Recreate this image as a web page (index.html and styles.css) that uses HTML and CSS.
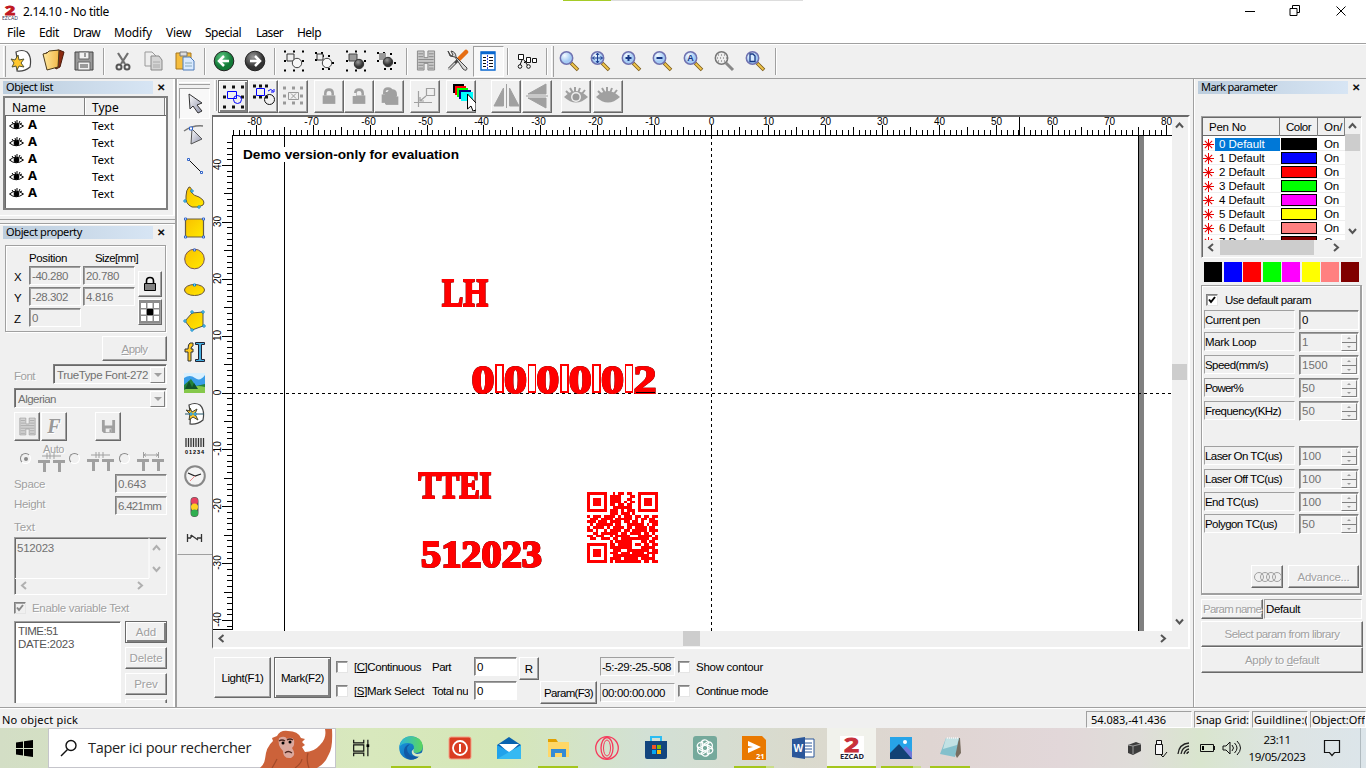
FILE: index.html
```html
<!DOCTYPE html>
<html lang="fr">
<head>
<meta charset="utf-8">
<title>2.14.10 - No title</title>
<link rel="stylesheet" href="styles.css">
</head>
<body>
<svg width="0" height="0" class="defs">
<defs>
<linearGradient id="gold" x1="0" y1="0" x2="1" y2="1"><stop offset="0" stop-color="#f9c000"/><stop offset="1" stop-color="#ffe900"/></linearGradient>
<linearGradient id="steel" x1="0" y1="0" x2="1" y2="1"><stop offset="0" stop-color="#fff"/><stop offset="1" stop-color="#8f93ab"/></linearGradient>
<linearGradient id="edgeg" x1="0" y1="0" x2="1" y2="1"><stop offset="0" stop-color="#1b9de2"/><stop offset="1" stop-color="#0c59a4"/></linearGradient>
<linearGradient id="edget" x1="0" y1="0" x2="1" y2="0"><stop offset="0" stop-color="#2bb5dd"/><stop offset="1" stop-color="#5bd65b"/></linearGradient>
<linearGradient id="fold" x1="0" y1="0" x2="1" y2="0"><stop offset="0" stop-color="#ffe9a0"/><stop offset="1" stop-color="#f2b84a"/></linearGradient>
<radialGradient id="greenb" cx=".4" cy=".3"><stop offset="0" stop-color="#5cc782"/><stop offset="1" stop-color="#137a38"/></radialGradient>
<radialGradient id="greyb" cx=".4" cy=".3"><stop offset="0" stop-color="#999"/><stop offset="1" stop-color="#333"/></radialGradient>
<radialGradient id="lens" cx=".35" cy=".3"><stop offset="0" stop-color="#f4faff"/><stop offset="1" stop-color="#a4cbf5"/></radialGradient>
<symbol id="mag" viewBox="0 0 24 24"><path d="M13 14l7 7" stroke="#7b5a18" stroke-width="3.600"/><path d="M13.500 14.500l6 6" stroke="#f0c64c" stroke-width="1.800"/><circle cx="8.500" cy="9" r="6.200" fill="url(#lens)" stroke="#7072b0" stroke-width="1.500"/></symbol>
<symbol id="eye" viewBox="0 0 15 11"><path d="M.5 6Q7 .5 14.500 6Q7 11.500 .5 6" fill="#fff" stroke="#000"/><path d="M3 2l1.500 2M6 1l.5 2M8 0v3M11 1l-1 2M13 3l-2 1" stroke="#000"/><circle cx="7.500" cy="6" r="2.800"/></symbol>
<symbol id="bigeye" viewBox="0 0 26 20"><path d="M1 11Q13-1 25 11Q13 22 1 11" fill="#a0a0a0"/><path d="M3 5l4 4M7 2l3 5M12 1v5M17 2l-2 5M22 4l-4 5" stroke="#a0a0a0" stroke-width="2"/></symbol>
<symbol id="lock" viewBox="0 0 16 18"><path d="M4.500 8V6q0-3.500 3.500-3.500t3.500 3.500v2" fill="none" stroke="#a0a0a0" stroke-width="2.400"/><path d="M2 8h12v8H2z" fill="#a0a0a0"/></symbol>
<symbol id="h" viewBox="0 0 20 22"><path d="M1 1h7v7h4V1h7v20h-7v-7H8v7H1z" fill="#c8c8c8" stroke="#888"/><path d="M2 4h5M2 7h5M2 10h16M2 13h16M2 16h5M2 19h5M13 4h5M13 7h5M13 16h5M13 19h5" stroke="#888"/></symbol>
<symbol id="page" viewBox="0 0 24 24"><path d="M6 3Q12 0 17 3Q22 8 20 18Q14 23 7 22Q8 12 6 3z" fill="#fff" stroke="#444" stroke-width="1.200"/></symbol>
<symbol id="tt" viewBox="0 0 28 19"><path d="M0 7h12v3h-4v9H5v-9H0zM15 7h12v3h-4v9h-3v-9h-5z" fill="#a0a0a0"/><path d="M4 3h19M9 0v6M12 0v6M16 0v6" stroke="#a0a0a0" fill="none"/></symbol>
<symbol id="tw" viewBox="0 0 28 19"><path d="M0 7h12v3h-4v9H5v-9H0zM15 7h12v3h-4v9h-3v-9h-5z" fill="#a0a0a0"/><path d="M6.500 3h15M6.500 0v6M21.500 0v6M9 1.500L7 3l2 1.500M19 1.500L21 3l-2 1.500" stroke="#a0a0a0" fill="none"/></symbol>
<symbol id="star" viewBox="0 0 12 12"><path d="M6 0v12M0 6h12M2 2l8 8M10 2l-8 8" stroke="#e80000" stroke-width="1.100"/></symbol>
</defs>
</svg>
<header class="title"><i class="share"></i>
<svg class="logo" viewBox="0 0 16 16"><text x="3" y="10.500" font-size="13" font-weight="bold" fill="#c01722" stroke="#c01722" textLength="10" lengthAdjust="spacingAndGlyphs">2</text><text x="0" y="15.500" font-size="5" textLength="16" lengthAdjust="spacingAndGlyphs" fill="#335">EZCAD</text></svg>
<span data-w="86">2.14.10 - No title</span>
<svg class="winctl" width="110" height="20" viewBox="0 0 110 20"><path d="M5 10.500h10M50 7.500h7v7h-7zM52.500 7v-2.500h7v7H57M96.500 5.500l9 9M105.500 5.500l-9 9" fill="none" stroke="#000"/></svg>
</header>
<nav class="menu"><span class="m1" data-w="18">File</span><span class="m2" data-w="20">Edit</span><span class="m3" data-w="27">Draw</span><span class="m4" data-w="38">Modify</span><span class="m5" data-w="25">View</span><span class="m6" data-w="36">Special</span><span class="m7" data-w="27">Laser</span><span data-w="24">Help</span></nav>
<div class="toolbar">
<i class="grip"></i>
<b><svg viewBox="0 0 24 24"><use href="#page"/><path d="M8 6l1 5 5-1-3 4 3 4-5-1-2 4-1-4-4 1 2-4-3-4 4 1z" fill="#ffc72b" stroke="#553" stroke-width="1"/></svg></b>
<b><svg viewBox="0 0 24 24"><path d="M5 4l13-3 5 2-4 15-4 2z" fill="#8c2a10" stroke="#4b1b0b"/><path d="M2 5l4-1 2-2 10-1-1 17-11 3z" fill="url(#fold)" stroke="#4b3a1b"/></svg></b>
<b><svg viewBox="0 0 24 24"><path d="M3 3h18v18H3z" fill="#999" stroke="#444"/><path d="M7 3h10v7H7zM6 13h12v8H6z" fill="#f2f2f2" stroke="#666"/><path d="M13 4v4M8 16h8M8 18h8" stroke="#444"/></svg></b>
<i class="sep"></i>
<b><svg viewBox="0 0 24 24"><path d="M7 4l7 11M17 4l-7 11" stroke="#707070" stroke-width="2.200"/><circle cx="8" cy="18" r="2.500" fill="none" stroke="#555" stroke-width="2"/><circle cx="16" cy="18" r="2.500" fill="none" stroke="#555" stroke-width="2"/></svg></b>
<b><svg viewBox="0 0 24 24"><path d="M3 3h7l4 4v10H3z" fill="#eee" stroke="#999"/><path d="M9 7h8l3 4v10H9z" fill="#d5d5d5" stroke="#888"/><path d="M11 13h7M11 16h7M11 18h7" stroke="#aaa"/></svg></b>
<b><svg viewBox="0 0 24 24"><path d="M3 4h15v16H3z" fill="#f5bd3e" stroke="#a7771d"/><path d="M7 3h7v4H7z" fill="#ddd" stroke="#777"/><path d="M10 8h7l4 4v9H10z" fill="#d9eaff" stroke="#4d7ab8"/><path d="M12 14h7M12 17h7" stroke="#8ab"/></svg></b>
<i class="sep"></i>
<b><svg viewBox="0 0 24 24"><circle cx="12" cy="12" r="9.800" fill="url(#greenb)" stroke="#222"/><path d="M12 7l-5 5 5 5M7 12h10" fill="none" stroke="#fff" stroke-width="2.500"/></svg></b>
<b><svg viewBox="0 0 24 24"><circle cx="12" cy="12" r="9.800" fill="url(#greyb)" stroke="#222"/><path d="M12 7l5 5-5 5M17 12H7" fill="none" stroke="#fff" stroke-width="2.500"/></svg></b>
<i class="sep"></i>
<b><svg viewBox="0 0 24 24"><path d="M2 2.500h20M2 12h20M2 21.500h20" stroke="#000" stroke-width="2" stroke-dasharray="2 7"/><path d="M5 5h7v7H5z" fill="#eee" stroke="#333"/><circle cx="15" cy="14" r="4.700" fill="#f8f8f8" stroke="#444"/></svg></b>
<b><svg viewBox="0 0 24 24"><path d="M2 4h10M2 11h4M9 7h12M9 20h12M19 14h2" stroke="#000" stroke-width="2" stroke-dasharray="2 4"/><path d="M4 5h6v6H4z" fill="#eee" stroke="#333"/><circle cx="14" cy="14" r="4.700" fill="#f8f8f8" stroke="#444"/></svg></b>
<b><svg viewBox="0 0 24 24"><path d="M2 2.500h20M2 12h20M2 21.500h20" stroke="#000" stroke-width="2" stroke-dasharray="2 7"/><path d="M5 5h8v7H5z" fill="#999" stroke="#444"/><circle cx="15" cy="15" r="4.700" fill="url(#greyb)" stroke="#333"/></svg></b>
<b><svg viewBox="0 0 24 24"><path d="M2 4h10M2 12h4M9 5h12M9 20h12M19 14h2" stroke="#000" stroke-width="2" stroke-dasharray="2 4"/><path d="M4 4h7v7H4z" fill="#999"/><circle cx="13" cy="13" r="4.700" fill="url(#greyb)" stroke="#333"/></svg></b>
<i class="sep"></i>
<b><svg viewBox="0 0 24 24"><use href="#h" x="2" y="1" width="20" height="21"/></svg></b>
<b><svg viewBox="0 0 24 24"><path d="M20 4L4 20" stroke="#444" stroke-width="3"/><path d="M21 3l-7 7" stroke="#e66e14" stroke-width="4.500" stroke-linecap="round"/><path d="M3 2l2 5 5 1 8 12q4 3 4-1L11 8q0-5-5-6l2 4-2 1z" fill="#d9d9d9" stroke="#444"/><path d="M10 14L3 21" stroke="#ccc" stroke-width="1.500"/></svg></b>
<b class="pressed"><svg viewBox="0 0 24 24"><path d="M5 3h14v18H5z" fill="#fff" stroke="#0867cf" stroke-width="1.400"/><path d="M5 4h14" stroke="#0867cf" stroke-width="2.500"/><path d="M7 8.500h3M13 8.500h4M7 11.500h3M13 11.500h4M7 14.500h3M13 14.500h4M7 17.500h3M13 17.500h4" stroke="#111"/><path d="M11.500 6v14" stroke="#34d" stroke-dasharray="2 1"/></svg></b>
<i class="sep"></i>
<b><svg viewBox="0 0 24 24"><path d="M3.500 5.500h5v5h-5zM11.500 8.500h4v5h-4zM17.500 9.500h4v4h-4zM7 11l-2 5M9 11l4 6M9 14l2-2" fill="#fff" stroke="#111"/><circle cx="5" cy="17.500" r="1.800" fill="#fff" stroke="#111"/><circle cx="13.500" cy="17.500" r="1.800" fill="#fff" stroke="#111"/></svg></b>
<i class="sep se"></i><i class="grip g2"></i>
<b><svg viewBox="0 0 24 24"><use href="#mag"/></svg></b>
<b><svg viewBox="0 0 24 24"><use href="#mag"/><path d="M8.500 4v10M3.500 9h10M7 6l1.500-2L10 6M7 12l1.500 2 1.500-2M5.500 7.500L3.500 9l2 1.500M11.500 7.500l2 1.500-2 1.500" fill="none" stroke="#1d3f91"/></svg></b>
<b><svg viewBox="0 0 24 24"><use href="#mag"/><path d="M8.500 6v6M5.500 9h6" stroke="#173784" stroke-width="2"/></svg></b>
<b><svg viewBox="0 0 24 24"><use href="#mag"/><path d="M5.500 9h6" stroke="#173784" stroke-width="2"/></svg></b>
<b><svg viewBox="0 0 24 24"><use href="#mag"/><text x="5.200" y="12.200" font-size="9" font-weight="bold" fill="#173784">A</text></svg></b>
<b><svg viewBox="0 0 24 24"><path d="M13 14l7 7" stroke="#888" stroke-width="3"/><circle cx="8.500" cy="9" r="6.200" fill="#eee" stroke="#777" stroke-width="1.500"/><path d="M5 6h8M4 9h10M5 12h8" stroke="#666" stroke-dasharray="1 2"/></svg></b>
<b><svg viewBox="0 0 24 24"><use href="#mag"/><path d="M6 5h3l2 2v5.500H6z" fill="#d7ebff" stroke="#173784" stroke-width="1.300"/></svg></b>
<i class="sep"></i>
</div>
<main>
<aside class="left">
<div class="cap"><span data-w="47">Object list</span></div><i class="close">✕</i>
<div class="objlist sunk">
<div class="lhead"><span>Name</span><span>Type</span></div>
<div class="orow"><svg><use href="#eye"/></svg><b>A</b><span>Text</span></div>
<div class="orow"><svg><use href="#eye"/></svg><b>A</b><span>Text</span></div>
<div class="orow"><svg><use href="#eye"/></svg><b>A</b><span>Text</span></div>
<div class="orow"><svg><use href="#eye"/></svg><b>A</b><span>Text</span></div>
<div class="orow"><svg><use href="#eye"/></svg><b>A</b><span>Text</span></div>
</div>
<div class="split"></div>
<div class="cap c2"><span data-w="76">Object property</span></div><i class="close">✕</i>
<div class="group">
<div class="ghead"><span data-w="38">Position</span><span data-w="43">Size[mm]</span></div>
<div class="gbody">
<div class="pos"><span>X</span><u data-w="36">-40.280</u><u data-w="33">20.780</u><span>Y</span><u data-w="36">-28.302</u><u data-w="27">4.816</u><span>Z</span><u>0</u></div>
<div class="gside"><div class="btn"><svg viewBox="0 0 16 18" width="16" height="18"><path d="M4.500 8V6q0-3.500 3.500-3.500t3.500 3.500v2" fill="none" stroke="#000" stroke-width="1.600"/><path d="M2.500 8.500h11v7h-11z" fill="#808080" stroke="#000"/></svg></div>
<div class="btn dark"><svg width="18" height="18" viewBox="0 0 18 18"><path d="M0 0h5v5H0zM6.500 0h5v5h-5zM13 0h5v5h-5zM0 6.500h5v5H0zM13 6.500h5v5h-5zM0 13h5v5H0zM6.500 13h5v5h-5zM13 13h5v5h-5z" fill="#fff"/><path d="M6 6h6v6H6z"/></svg></div></div>
</div></div>
<div class="apply btn dis"><span data-w="26"><ins>A</ins>pply</span></div>
<div class="fontrow dis"><span data-w="21">Font</span><div class="sel"><span data-w="91">TrueType Font-272</span><em></em></div></div>
<div class="sel alg"><span data-w="38">Algerian</span><em></em></div>
<div class="fbtns"><div class="btn"><svg viewBox="0 0 20 22" width="17" height="19" opacity=".7"><use href="#h"/></svg></div><div class="btn fi">F</div><div class="btn sv"><svg viewBox="0 0 16 16" width="15" height="15"><path d="M1 1h14v14H3l-2-2z" fill="#a0a0a0"/><path d="M4 1h8v6H4zM5 10h6v4H5z" fill="#eee"/><path d="M9 11h2v3H9z" fill="#a0a0a0"/></svg></div></div>
<div class="radios dis"><i class="rad on"></i><div class="auto"><span data-w="21">Auto</span><svg><use href="#tt"/></svg></div><i class="rad"></i><svg><use href="#tt"/></svg><i class="rad r3"></i><svg><use href="#tw"/></svg></div>
<div class="pr dis p1"><span data-w="31">Space</span><u data-w="28">0.643</u></div>
<div class="pr dis p2"><span data-w="31">Height</span><u data-w="43">6.421mm</u></div>
<div class="txl dis"><span data-w="21">Text</span></div>
<div class="area sunk"><span data-w="37">512023</span><svg width="149" height="55" viewBox="0 0 149 55"><path d="M134 0v40M0 40.500h134" stroke="#fff" stroke-width="1"/><path d="M138 12l3.500-4 3.500 4M138 29l3.500 4 3.500-4M11 44l-4 3.500 4 3.500M123 44l4 3.500-4 3.500" fill="none" stroke="#b0b0b0" stroke-width="2"/></svg></div>
<div class="env dis"><i class="chk off"><svg viewBox="0 0 10 10"><path d="M2 4.500l2 2.500 4-5" fill="none" stroke="#888" stroke-width="2"/></svg></i><span data-w="97">Enable variable Text</span></div>
<div class="vars"><div class="vlist sunk"><span data-w="40">TIME:51</span><br><span data-w="56">DATE:2023</span></div><div class="vb dis"><div class="btn foc">Add</div><div class="btn">Delete</div><div class="btn">Prev</div><div class="btn"></div></div></div>
</aside>
<aside class="tools">
<i class="hg"></i>
<b class="pressed"><svg viewBox="0 0 24 24"><path d="M6 2l1 15 3-3 5 7 4-2-5-6 5-2z" fill="url(#steel)" stroke="#333"/></svg></b>
<b><svg viewBox="0 0 24 24"><path d="M1 8Q10 2 20 3" fill="none" stroke="#777" stroke-width="1.500"/><path d="M9 6l-1 15 11-5z" fill="url(#steel)" stroke="#555"/><path d="M6.500 4h3v3h-3z" fill="#fff" stroke="#36c"/></svg></b>
<b><svg viewBox="0 0 24 24"><path d="M6 6l12 12" stroke="#111"/><path d="M4.500 4.500h2v2h-2zM17.500 17.500h2v2h-2z" fill="#fff" stroke="#36c"/></svg></b>
<b><svg viewBox="0 0 24 24"><path d="M6 2Q9 2 8 7Q11 11 16 12Q23 16 20 20Q16 23 9 22Q2 19 3 11Q3 5 6 2z" fill="url(#gold)" stroke="#645535"/><path d="M8 5h2v2H8zM1 15h2v2H1zM15 21h2v2h-2z" fill="#fff" stroke="#08c"/></svg></b>
<b><svg viewBox="0 0 24 24"><path d="M2.500 3h18v18h-18z" fill="url(#gold)" stroke="#665d45" stroke-width="1.200"/><path d="M1.500 2h2v2h-2zM19.500 2h2v2h-2zM1.500 20h2v2h-2zM19.500 20h2v2h-2z" fill="#fff" stroke="#36c"/></svg></b>
<b><svg viewBox="0 0 24 24"><circle cx="11.500" cy="12" r="9.800" fill="url(#gold)" stroke="#755"/><path d="M10.500 2h2v2h-2z" fill="#fff" stroke="#36c"/></svg></b>
<b><svg viewBox="0 0 24 24"><ellipse cx="11.500" cy="12" rx="10" ry="5.500" fill="url(#gold)" stroke="#665540"/><path d="M10.500 6h2v2h-2z" fill="#fff" stroke="#08c"/></svg></b>
<b><svg viewBox="0 0 24 24"><path d="M9 4l11-1v14l-11 4-7-9z" fill="url(#gold)" stroke="#555"/><path d="M8 2h2v2H8zM19 2h2v2h-2zM1 11h2v2H1zM20 16h2v2h-2zM8 20h2v2H8z" fill="#fff" stroke="#08c"/></svg></b>
<b><svg viewBox="0 0 24 24"><path d="M10 6V3H7Q5 4 5 9H2v3h3v9h3v-9h2V9H8q0-3 2-3z" fill="#ffc91a" stroke="#333"/><path d="M12.500 2.500h9v2h-3v15h3v2h-9v-2h3v-15h-3z" fill="#45aee0" stroke="#223"/></svg></b>
<b><svg viewBox="0 0 24 24"><path d="M1 2h21v20H1z" fill="#3a9de8"/><path d="M1 7q6-4 11 0t10-3v-2H1z" fill="#d8f0ff"/><path d="M1 14l7-6 5 7 9-2v9H1z" fill="#22823a"/><path d="M1 19q10-6 21-3v6H1z" fill="#85c84a"/><path d="M2 18l4-8 4 8zM8 18l3-6 4 6z" fill="#12522a"/></svg></b>
<b><svg viewBox="0 0 24 24"><use href="#page"/><path d="M2 12h19" stroke="#256"/><path d="M7 6l2 4 5-3-2 5 3 6-5-3-4 3 1-6-4-4 4 1z" fill="#ffc72b" stroke="#443"/><path d="M7 11h2v2H7zM11 11h2v2h-2z" fill="#fff" stroke="#08c"/></svg></b>
<b><svg viewBox="0 0 24 24"><path d="M3 5v9M5.500 5v9M8 5v9M10.500 5v9M13 5v9M15.500 5v9M18 5v9M20.500 5v9" stroke="#333" stroke-width="1.300"/><text x="2" y="20.500" font-size="5.500" textLength="19">01234</text></svg></b>
<b><svg viewBox="0 0 24 24"><circle cx="12" cy="12" r="9.800" fill="#f4f4f4" stroke="#888" stroke-width="2"/><path d="M5 9l7 3 6-2" fill="none" stroke="#222" stroke-width="1.300"/><path d="M12 12l-5 5" stroke="#e88"/></svg></b>
<b><svg viewBox="0 0 24 24"><rect x="7.500" y="2" width="8" height="20" rx="4" fill="#555"/><circle cx="11.500" cy="6" r="3.500" fill="#e54060"/><circle cx="11.500" cy="12" r="3.500" fill="#ffd020"/><circle cx="11.500" cy="18" r="3.500" fill="#2fae50"/></svg></b>
<b><svg viewBox="0 0 24 24"><path d="M4.500 8v8M18.500 8v8M4 12h4M14 12h4M8 9l7 5M8 9v3" stroke="#333" fill="none" stroke-width="1.300"/></svg></b>
</aside>
<section class="center">
<div class="bar2"><i class="grip"></i>
<div class="btn foc"><svg viewBox="0 0 26 26"><path d="M3 4h3M12 4h3M21 4h3M3 14h3M21 14h3M3 24h3M12 24h3M21 24h3" stroke="#111" stroke-width="3"/><path d="M7.500 8.500h9v7h-9z" fill="none" stroke="#00f"/><circle cx="17.500" cy="16.500" r="4" fill="none" stroke="#00f"/></svg></div>
<div class="btn"><svg viewBox="0 0 26 26"><path d="M3 3h3M9 3h3M15 3h3M3 14h3M9 14h3M15 14h3" stroke="#111" stroke-width="3"/><path d="M6.500 5.500h8v7h-8zM18 8q3-3 5 0m1-2v3h-3" fill="none" stroke="#00f"/><circle cx="19.500" cy="16.500" r="5" fill="none" stroke="#111"/></svg></div>
<div class="btn"><svg viewBox="0 0 26 26"><path d="M3 5h3M12 5h3M20 5h3M3 13h3M20 13h3M3 20h3M12 20h3M20 20h3" stroke="#999" stroke-width="3"/><path d="M8.500 9.500h10v7h-10zM11 10.500l5 5M16 10.500l-5 5" fill="none" stroke="#999"/></svg></div>
<div class="btn s7"><svg viewBox="0 0 26 26"><use href="#lock" x="4" y="4" width="18" height="19"/></svg></div>
<div class="btn"><svg viewBox="0 0 26 26"><use href="#lock" x="4" y="4" width="18" height="19"/><path d="M6 10h4v3H6z" fill="#efefef"/></svg></div>
<div class="btn"><svg viewBox="0 0 26 26"><use href="#lock" x="3" y="3" width="18" height="19"/><use href="#lock" x="7" y="5" width="18" height="19"/><path d="M9 9h11v12H9z" fill="#a0a0a0"/></svg></div>
<div class="btn s7"><svg viewBox="0 0 26 26"><path d="M2 19.500h18M6.500 8v16M14.500 5.500h8v7h-8zM14 13l-6 5M8 14v4h4" fill="none" stroke="#a0a0a0" stroke-width="1.200"/></svg></div>
<div class="btn s7 col"><svg viewBox="0 0 26 28"><path d="M3 1h11v9H3z"/><path d="M5 3h11v9H5z" fill="red"/><path d="M7 5h11v9H7z" fill="#0f0"/><path d="M9 7h12v9H9z" fill="navy"/><path d="M11 9h12v9H11z" fill="#0ff"/><path d="M17.500 11v15l3.500-3 2 5 3-1v-7z" fill="#fff" stroke="#000"/></svg></div>
<div class="btn s16"><svg viewBox="0 0 26 26"><path d="M10.500 5v18H1zM16.500 5v18H26zM13.500 1v24" fill="#a0a0a0" stroke="#a0a0a0"/></svg></div>
<div class="btn s2"><svg viewBox="0 0 26 26"><path d="M22 1v10H4zM22 25V15H4zM2 13h22" fill="#a0a0a0" stroke="#a0a0a0"/></svg></div>
<div class="btn s10"><svg viewBox="0 0 26 26"><use href="#bigeye" y="3" width="26" height="20"/><circle cx="13" cy="14" r="5" fill="#eee"/><circle cx="13" cy="14" r="3.500" fill="#999"/></svg></div>
<div class="btn s3"><svg viewBox="0 0 26 26"><use href="#bigeye" y="3" width="26" height="20"/></svg></div>
</div>
<div class="view">
<svg id="canvas" width="959" height="514" viewBox="213 117 959 514">
<path d="M1141.500 136v495" stroke="#808080" stroke-width="5"/><path d="M284.500 136v495M1138.500 136v495" stroke="#000"/>
<path d="M241 147h220v15H241z" fill="#fff"/><text x="243" y="159" class="demo" textLength="216" lengthAdjust="spacingAndGlyphs">Demo version-only for evaluation</text>
<path d="M232 393.500h940M711.500 136v495" stroke="#000" stroke-dasharray="3 3"/>
<g id="ruler" stroke="#000"></g><g id="labels" class="rl"></g>
<g class="alg-t"><text x="442" y="305.500" font-size="41" textLength="46" lengthAdjust="spacingAndGlyphs">LH</text>
<text x="418.500" y="497.500" font-size="37" textLength="73" lengthAdjust="spacingAndGlyphs">TTEI</text>
<text x="421" y="567" font-size="37" textLength="121" lengthAdjust="spacingAndGlyphs">512023</text></g>
<g class="alg-t" id="serial"></g>
<path d="M636 392.500h19" stroke="#000"/>
<g id="qr" fill="red"></g>
</svg>
<div class="vs"><svg width="16" height="514" viewBox="0 0 16 514"><path d="M0 247h15v16H0z" fill="#cdcdcd"/><path d="M4 10.500l3.500-4 3.500 4M4 502.500l3.500 4 3.500-4" class="ar"/></svg></div>
<div class="hs"><svg width="975" height="16" viewBox="0 0 975 16"><path d="M470 0h17v15h-17z" fill="#cdcdcd"/><path d="M10.500 4l-4 3.500 4 3.500M948 4l4 3.500-4 3.500" class="ar"/></svg></div>
</div>
<div class="ctl">
<div class="btn big"><span data-w="42">Light(F1)</span></div><div class="btn big foc"><span data-w="43">Mark(F2)</span></div>
<div class="cc k1"><label><i class="chk"></i><span data-w="67"><ins>[C]</ins>Continuous</span></label><label><i class="chk"></i><span data-w="70"><ins>[S]</ins>Mark Select</span></label></div>
<div class="cc k2"><span data-w="19">Part</span><span class="tot" data-w="36">Total nu</span></div>
<div class="cc k3"><u>0</u><u>0</u></div>
<div class="btn rb">R</div><div class="btn pb"><span data-w="49">Param(F3)</span></div>
<div class="cc k4"><u data-w="69">-5:-29:-25.-508</u><u data-w="63">00:00:00.000</u></div>
<div class="cc k1 k5"><label><i class="chk"></i><span data-w="67">Show contour</span></label><label><i class="chk"></i><span data-w="72">Continue mode</span></label></div>
</div>
</section>
<aside class="right">
<div class="cap"><span data-w="76">Mark parameter</span></div><i class="close">✕</i>
<div class="pens sunk"><div class="pview">
<div class="phead"><span data-w="37">Pen No</span><span data-w="25">Color</span><span>On/</span></div>
<div class="prow sel0"><svg><use href="#star"/></svg><span><q data-w="43">0 Default</q></span><i class="k"></i><em>On</em></div>
<div class="prow"><svg><use href="#star"/></svg><span><q data-w="43">1 Default</q></span><i class="b"></i><em>On</em></div>
<div class="prow"><svg><use href="#star"/></svg><span><q data-w="43">2 Default</q></span><i class="r"></i><em>On</em></div>
<div class="prow"><svg><use href="#star"/></svg><span><q data-w="43">3 Default</q></span><i class="g"></i><em>On</em></div>
<div class="prow"><svg><use href="#star"/></svg><span><q data-w="43">4 Default</q></span><i class="m"></i><em>On</em></div>
<div class="prow"><svg><use href="#star"/></svg><span><q data-w="43">5 Default</q></span><i class="y"></i><em>On</em></div>
<div class="prow"><svg><use href="#star"/></svg><span><q data-w="43">6 Default</q></span><i class="p"></i><em>On</em></div>
<div class="prow"><svg><use href="#star"/></svg><span><q data-w="43">7 Default</q></span><i class="d"></i><em>On</em></div>
</div>
<svg class="pvs" width="16" height="122" viewBox="0 0 16 122"><path d="M0 16h15v17H0z" fill="#cdcdcd"/><path d="M4 10l3.500-4 3.500 4M4 111l3.500 4 3.500-4" class="ar"/></svg>
<svg class="phs" width="158" height="16" viewBox="0 0 158 16"><path d="M17 0h94v15H17z" fill="#cdcdcd"/><path d="M10 4L6 7.500l4 3.500M131 4l4 3.500-4 3.500" class="ar"/></svg>
</div>
<div class="sw"><i class="k"></i><i class="b"></i><i class="r"></i><i class="g"></i><i class="m"></i><i class="y"></i><i class="p"></i><i class="d"></i></div>
<div class="params">
<label><i class="chk"><svg viewBox="0 0 10 10"><path d="M2 4.500l2 2.500 4-5" fill="none" stroke="#000" stroke-width="2"/></svg></i><span data-w="86">Use default param</span></label>
<div class="q act"><span data-w="55">Current pen</span><u>0</u></div>
<div class="q"><span data-w="51">Mark Loop</span><u>1<s></s></u></div>
<div class="q"><span data-w="63">Speed(mm/s)</span><u>1500<s></s></u></div>
<div class="q"><span data-w="38">Power%</span><u>50<s></s></u></div>
<div class="q"><span data-w="76">Frequency(KHz)</span><u>50<s></s></u></div>
<div class="q brk"><span data-w="77">Laser On TC(us)</span><u>100<s></s></u></div>
<div class="q"><span data-w="77">Laser Off TC(us)</span><u>100<s></s></u></div>
<div class="q"><span data-w="53">End TC(us)</span><u>100<s></s></u></div>
<div class="q last"><span data-w="72">Polygon TC(us)</span><u>50<s></s></u></div>
<div class="adv dis"><div class="btn"><svg width="29" height="12" viewBox="0 0 29 12" fill="none" stroke="#a0a0a0"><circle cx="6" cy="6" r="4.500"/><circle cx="12" cy="6" r="4.500"/><circle cx="18" cy="6" r="4.500"/><circle cx="24" cy="6" r="4.500"/></svg></div><div class="btn"><span data-w="52">Advance...</span></div></div>
</div>
<div class="pn"><div class="btn dis"><span data-w="58">Param name</span></div><u data-w="34">Default</u></div>
<div class="btn dis wide"><span data-w="115">Select param from library</span></div>
<div class="btn dis wide w2"><span data-w="74">Apply to <ins>d</ins>efault</span></div>
</aside>
</main>
<footer class="status"><span class="st" data-w="76">No object pick</span><div class="pane a"><span data-w="75">54.083,-41.436</span></div><div class="pane"><span data-w="53">Snap Grid:</span></div><div class="pane"><span data-w="54">Guildline:(</span></div><div class="pane"><span data-w="53">Object:Off</span></div></footer>
<footer class="task">
<div class="start"><svg width="17" height="17" viewBox="0 0 17 17"><path d="M0 2.500l7-1V8H0zM8 1.300L17 0v8H8zM0 9h7v6.500l-7-1zM8 9h9v8l-9-1.300z"/></svg></div>
<div class="search"><svg width="18" height="18" viewBox="0 0 18 18"><circle cx="11" cy="6.500" r="5" fill="none" stroke="#111" stroke-width="1.400"/><path d="M7.500 10.500L1 17" stroke="#111" stroke-width="1.400"/></svg><span data-w="163">Taper ici pour rechercher</span>
<svg class="ape" width="74" height="39" viewBox="0 0 74 39"><path d="M1 39Q5 36 6 30Q7 18 14 12L13 9l5-2Q21 1 29 2Q39 2 42 9l4 1-3 3 3 3-3 2 3 5q9 0 15-7 7-7 5-16h7q1 18-3 25-4 10-12 14z" fill="#cc623a"/><path d="M13 39q3-5 5-9M50 39q-3-8-1-15M36 39q6-4 7-9" fill="none" stroke="#a34a29" stroke-width="1.200"/><path d="M20 9q6-3 8 1 5-3 7 1 1 5-2 8 5 7-1 10-8 1-8-7-6-6-4-13z" fill="#dba89d"/><path d="M20 12q3-2 6 0M28 11q3-2 6 0M26 24q3-3 7 0" fill="none" stroke="#4a251d" stroke-width="1.300"/><circle cx="24" cy="14" r="1.500"/><circle cx="31" cy="13" r="1.500"/></svg></div>
<div class="ti tv"><svg viewBox="0 0 24 24"><path d="M4 3v3.500h11V3M4 21v-3.500h11V21M4 8.500h11v7H4zM19.500 3v18" fill="none" stroke="#111" stroke-width="1.300"/><path d="M18 8h3v3h-3z"/></svg></div>
<div class="ti run"><svg viewBox="0 0 24 24"><circle cx="12" cy="12" r="11.800" fill="url(#edgeg)"/><path d="M.2 11Q2 .2 12 .2 23 1 23.800 10q0 6-6 7-5 0-3-4Q16 7 9 7 3 7 .2 11z" fill="url(#edget)"/><path d="M11 8q-6 5 0 11 6 4 11-1-4 6-11 5.500-7-2-6-9.500 1-5 6-6z" fill="#1259a5"/><path d="M15 13q-2 4 3 5 3 0 6-2l-1 4q-5 2-9-1-3-4 1-6z" fill="#d9e9c2"/></svg></div>
<div class="ti"><svg viewBox="0 0 24 24"><rect x="1" y="1" width="22" height="22" rx="2" fill="#da3d22" stroke="#f5a187"/><circle cx="12" cy="12" r="7" fill="none" stroke="#fff" stroke-width="1.800"/><path d="M12 8v8" stroke="#fff" stroke-width="2"/></svg></div>
<div class="ti"><svg viewBox="0 0 24 24"><path d="M0 9L12 1l12 8v14H0z" fill="#0862af"/><path d="M2 8h20l-10 9z" fill="#fff"/><path d="M0 9l24 14H0z" fill="#20a2eb"/><path d="M24 9L0 23h24z" fill="#35b9f2"/></svg></div>
<div class="ti run"><svg viewBox="0 0 24 24"><path d="M2 3h8l2 3v4H2z" fill="#e2a000"/><path d="M2 6h21v15H2z" fill="#ffd767"/><path d="M5 13h15v8h-4v-4H9v4H5z" fill="#348bd5"/></svg></div>
<div class="ti"><svg viewBox="0 0 24 24" fill="none" stroke="#f63a5c"><circle cx="12" cy="12" r="11.300" stroke-width="1.300"/><ellipse cx="12" cy="12" rx="6" ry="10.500" stroke-width="1.300"/><ellipse cx="12" cy="12" rx="3.500" ry="8"/></svg></div>
<div class="ti"><svg viewBox="0 0 24 24"><path d="M7 6V1h10v5" fill="none" stroke="#2cbdf2" stroke-width="2"/><path d="M1 5h22v16q0 2-2 2H3q-2 0-2-2z" fill="#12457e"/><path d="M8 9h4v4H8z" fill="#f35325"/><path d="M13 9h4v4h-4z" fill="#81bc06"/><path d="M8 14h4v4H8z" fill="#05a6f0"/><path d="M13 14h4v4h-4z" fill="#ffba08"/></svg></div>
<div class="ti"><svg viewBox="0 0 24 24"><rect width="24" height="24" rx="3" fill="#75a99b"/><g fill="none" stroke="#fff" stroke-width="1.200"><path id="petal" d="M12 9l-4 2.300V7q1-4 5-3 2 1 3 3l-4 2.300"/><use href="#petal" transform="rotate(60 12 12)"/><use href="#petal" transform="rotate(120 12 12)"/><use href="#petal" transform="rotate(180 12 12)"/><use href="#petal" transform="rotate(240 12 12)"/><use href="#petal" transform="rotate(300 12 12)"/></g></svg></div>
<div class="ti run two"><svg viewBox="0 0 24 24"><path d="M0 0h20l4 4v20H0z" fill="#e97900"/><path d="M6 5l13 6-13 6v-5l5-1-5-1z" fill="#fff"/><text x="14" y="22.500" font-size="7.500" font-weight="bold" fill="#fff">21</text></svg></div>
<div class="ti"><svg viewBox="0 0 24 24"><path d="M12 3h11v18H12z" fill="#fff" stroke="#2b579a"/><path d="M14 7h7M14 10h7M14 13h7M14 16h7" stroke="#2b579a"/><path d="M1 3l13-2v22L1 21z" fill="#2b579a"/><text x="2.500" y="15.500" font-size="10" font-weight="bold" fill="#fff">W</text></svg></div>
<div class="ti run cur"><svg viewBox="0 0 24 24"><path d="M0 0h24v24H0z" fill="#fff"/><text x="4" y="16" font-size="20" font-weight="bold" fill="#c8303a" stroke="#c8303a" textLength="15" lengthAdjust="spacingAndGlyphs">2</text><text x="0" y="23" font-size="6.500" font-weight="bold" fill="#223" textLength="24" lengthAdjust="spacingAndGlyphs">EZCAD</text></svg></div>
<div class="ti run two"><svg viewBox="0 0 24 24"><path d="M1 1h22v22H1z" fill="#27a4e8"/><path d="M14 13l3-3 6 6v7H13z" fill="#7078d8"/><path d="M1 17l9-9 13 15H1z" fill="#124274"/><circle cx="16" cy="6" r="2" fill="#fff"/></svg></div>
<div class="ti run"><svg viewBox="0 0 24 24"><path d="M9 2h13l1 15-4 5z" fill="#776d60"/><path d="M8 2h13l-4 19-15-3z" fill="#84c0cc"/><path d="M8 2h13l-2 7-14 4z" fill="#c2e1e4"/><path d="M9 2h12" stroke="#eee" stroke-dasharray="1 1" stroke-width="2"/></svg></div>
<svg class="tray" width="130" height="24" viewBox="0 0 130 24"><path d="M3 9l8-3 5 2v7l-8 4-5-2z" fill="#3c3c3c"/><path d="M8 10v8M3 9l5 1 8-2" stroke="#999" fill="none"/><path d="M31.500 4.500h5v4h-5zM30.500 8.500h7v10h-7z" fill="#f5f5f5" stroke="#111"/><path d="M35 18l3 3 4-5" fill="none" stroke="#111"/><path d="M53 18Q54 8 64 7M56 18q1-7 8-8M59 18q1-4 5-5M62 18q0-2 2-2" fill="none" stroke="#222" stroke-width="1.300"/><path d="M75.500 8.500h13v7h-13zM89.500 10v4" fill="none" stroke="#111"/><path d="M77 10h2v4h-2z"/><path d="M98 10h3l4-4v12l-4-4h-3zM107 9q3 3 0 6M109.500 7q5 5 0 10M112 5q7 7 0 14" fill="none" stroke="#111"/></svg>
<div class="clock"><span data-w="27">23:11</span><span data-w="57">19/05/2023</span></div>
<svg class="note" width="18" height="18" viewBox="0 0 18 18"><path d="M1.500 1.500h15v12h-5l-2.500 3-2.500-3h-5z" fill="none" stroke="#111" stroke-width="1.200"/></svg>
<i class="desk"></i>
</footer>
<script src="app.js"></script>
</body>
</html>
```
FILE: styles.css
```css
*{box-sizing:border-box}
body{margin:0;width:1366px;height:768px;overflow:hidden;background:#f0f0f0;display:flex;flex-direction:column;font:11.500px/14px "Liberation Sans",Arial,sans-serif;color:#000}
i,em{font-style:normal}u{text-decoration:none}q{quotes:none}q:before,q:after{content:none}
svg{display:block;flex:none}.defs{position:absolute}
[data-w]{white-space:nowrap}
.title,.menu,.cap,.status,.objlist{font-family:"Noto Sans","Open Sans",sans-serif}
.title{height:22px;background:#fff;display:flex;align-items:center;padding:2px 0 0 2px;position:relative;font-size:12px}
.title .logo{width:16px;height:16px;margin-right:5px}
.share{position:absolute;left:563px;top:0;width:240px;height:1px;background:linear-gradient(90deg,#a5cb27 48px,#ddd 48px)}
.winctl{margin-left:auto;margin-right:16px;margin-top:-3px}
.menu{height:21px;background:#fff;padding-left:7px;display:flex;align-items:center;line-height:20px;font-size:12px}
.menu span{margin-right:14px}.menu .m6{margin-right:15px}
.toolbar{height:36px;border-top:1px solid #a0a0a0;border-bottom:1px solid #a0a0a0;box-shadow:inset 0 1px #fff;display:flex;align-items:center;padding-left:3px}
.toolbar b{width:31px;height:31px;display:grid;place-items:center}
.toolbar b svg,.tools b svg{width:24px;height:24px}
.toolbar b svg{margin-left:-1px}
.pressed{background:#f8f8f8;border:1px solid;border-color:#a0a0a0 #fff #fff #a0a0a0}
.sep{width:1px;height:27px;background:#a0a0a0;box-shadow:1px 0 #fff;margin:0 4px 0 3px}
.se{margin:0 3px 0 3px}
.grip{width:3px;height:31px;border-right:1px solid #a0a0a0;border-left:1px solid #fff;margin-right:1px;flex:none}
.g2{margin:0 1px}
main{height:628px;display:flex}
.left{width:177px;border-right:2px solid #a0a0a0;padding:2px 0 0 3px;overflow:hidden;display:flex;flex-direction:column;box-shadow:inset -2px 0 #fff}
.cap{width:150px;height:13px;background:linear-gradient(90deg,#bccddd,#d7e5f4);line-height:12px;font-size:11px;padding-left:3px;flex:none}
.close{height:13px;margin:-13px 0 0 154px;font:bold 10px/14px "DejaVu Sans",sans-serif;flex:none;width:11px;-webkit-text-stroke:.4px}
.sunk{border:1px solid;border-color:#a0a0a0 #fff #fff #a0a0a0;box-shadow:inset 1px 1px #696969}
.objlist{width:165px;height:114px;background:#fff;margin-top:2px;padding:0;flex:none;border:2px solid #808080}
.lhead{height:18px;background:#f0f0f0;display:flex;border-bottom:1px solid #696969;font-size:12px;line-height:20px;margin-bottom:1px}
.lhead span{width:80px;padding-left:7px;border-right:1px solid #808080;box-shadow:1px 0 #fff}
.orow{height:17px;display:flex;align-items:center;font-size:11.500px}
.orow svg{width:15px;height:11px;margin:0 4px 0 4px}
.orow b{font:bold 13px/15px "Noto Sans",sans-serif;width:64px;margin-top:-3px}
.split{height:10px;margin:5px 0 0 -3px;flex:none;background:linear-gradient(#f0f0f0 3px,#a0a0a0 3px,#a0a0a0 4px,#f0f0f0 4px,#f0f0f0 7px,#a0a0a0 7px,#a0a0a0 8px,#f0f0f0 8px);border-top:1px solid #fff;border-bottom:1px solid #fff}
.c2{margin-top:1px}
.group{border:1px solid #a0a0a0;box-shadow:1px 1px #fff,inset 1px 1px #fff;width:161px;height:87px;margin:6px 0 0 2px;padding-top:4px;flex:none}
.ghead{display:flex;height:16px;padding-left:23px;gap:28px;line-height:17px}
.gbody{display:flex}
.pos{display:grid;grid-template-columns:13px 52px 52px;grid-auto-rows:19px;gap:2px;padding-left:8px;line-height:23px}
.pos u,.pr u,.params .q u,.pn u,.cc u{display:block;border:1px solid;border-color:#808080 #fff #fff #808080;box-shadow:inset 1px 1px #a0a0a0;padding-left:2px;line-height:18px;color:#707070}
.gside{padding:5px 0 0 5px;display:grid;gap:2px;align-content:start;margin-left:-2px}
.gside .btn{width:24px;height:26px}
.btn{border:1px solid;border-color:#fff #696969 #696969 #fff;box-shadow:inset -1px -1px #a0a0a0;display:grid;place-items:center;flex:none;white-space:nowrap}
.btn.foc{border-color:#696969;box-shadow:inset 1px 1px #fff,inset -2px -2px #808080}
.btn.dark{background:#8c8c8c}
.dis{color:#a0a0a0;text-shadow:1px 1px #fff}
.apply{width:65px;height:25px;margin:4px 0 0 99px}
.fontrow{display:flex;height:20px;margin:3px 0 0 11px;align-items:center}
.fontrow .sel{width:114px;margin-left:18px}
.fontrow>span{padding-top:3px}
.sel{height:20px;border:1px solid;border-color:#808080 #fff #fff #808080;box-shadow:inset 1px 1px #696969;display:flex;justify-content:space-between;align-items:center;padding:1px 1px 0 3px;color:#707070;text-shadow:none;flex:none}
.sel em{width:15px;height:16px;border:1px solid;border-color:#fff #808080 #808080 #fff;display:grid;place-items:center}
.sel em:before{content:"";border:4px solid transparent;border-top-color:#a0a0a0;border-bottom:0}
.alg{width:153px;margin:4px 0 0 11px}
.fbtns{display:flex;margin:4px 0 0 11px;gap:1px;height:29px;flex:none}
.fbtns .btn{width:26px;height:29px}.fbtns .sv{margin-left:27px}
.fi{font:italic bold 20px "Liberation Serif",serif;color:#999;text-shadow:1px 1px #fff}
.radios{display:flex;height:30px;margin-left:17px;align-items:flex-start;flex:none}
.radios svg{width:28px;height:19px;margin:11px 0 0 7px}
.radios .auto svg{margin:-3px 0 0}
.auto{font-size:11px;width:28px;margin-left:7px;padding-top:1px}.auto span{padding-left:5px}
.rad{width:11px;height:11px;border-radius:50%;border:1.500px solid;border-color:#888 #fff #fff #888;margin:12px 0 0 3px;display:grid;place-items:center;flex:none}
.radios .on{margin-left:0}
.rad.on:before{content:"";width:4px;height:4px;border-radius:50%;background:#888}
.rad.r3{margin-left:4px}
.pr{display:flex;justify-content:space-between;margin-left:11px;width:153px;height:19px;align-items:center;flex:none}
.pr u{width:52px;height:19px;text-shadow:none;line-height:19px}.p1{margin-top:3px}.p2{margin-top:3px}.p2 span{padding-bottom:3px}
.txl{margin:5px 0 0 11px;height:14px}
.area{width:153px;height:58px;margin:3px 0 0 11px;display:grid;flex:none;color:#707070}
.area>*{grid-area:1/1}.area span{padding:3px 0 0 2px}
.env{display:flex;align-items:center;margin:6px 0 0 11px;gap:6px;height:13px;flex:none}
.env span{padding-top:1px}
.chk{width:12px;height:12px;background:#fff;border:1px solid;border-color:#808080 #e5e5e5 #e5e5e5 #808080;box-shadow:inset 1px 1px #a0a0a0;flex:none}
.chk svg{width:10px;height:10px}
.chk.off{background:#f0f0f0}
.vars{display:flex;gap:4px;margin:7px 0 0 11px;height:82px;overflow:hidden;flex:none}
.vlist{width:107px;height:90px;background:#fff;color:#555;padding:3px 3px;line-height:13px}
.vb{display:grid;grid-auto-rows:22px;gap:4px;width:42px;align-content:start}
.tools{width:35px;padding:3px 0 0 1px;height:476px;border-bottom:1px solid #a0a0a0;border-left:1px solid #fff}
.tools b{width:31px;height:31px;display:grid;place-items:center}
.hg{display:block;height:3px;width:31px;border-top:1px solid #fff;border-bottom:1px solid #a0a0a0;margin-bottom:3px}
.center{width:981px;display:flex;flex-direction:column}
.bar2{height:36px;padding:1px 0 0 2px;display:flex;flex:none}
.bar2 .btn{width:30px;height:33px}.bar2 svg{width:26px;height:26px;margin-top:-2px}
.bar2 .s7{margin-left:6px}.bar2 .s16{margin-left:15px}.bar2 .s2{margin-left:1px}.bar2 .s10{margin-left:9px}.bar2 .s3{margin-left:2px}
.bar2 .col svg{height:28px;margin:0 0 0 3px}
.view{width:978px;height:534px;border:2px solid;border-width:2px 2px 2px 1px;border-color:#696969 #fff #fff #696969;display:grid;grid-template-columns:959px 16px;grid-template-rows:514px 16px;flex:none;align-content:start}
#canvas{background:#fff;shape-rendering:crispEdges}
.hs{grid-column:1/3}
.ar{fill:none;stroke:#555;stroke-width:2}
.demo{font:bold 13.500px "Liberation Sans",sans-serif}
.rl{font:10px "Liberation Sans",sans-serif;text-anchor:middle}
.alg-t{font-family:"Liberation Serif",serif;font-weight:bold;fill:red;stroke:red;stroke-width:1.800;filter:drop-shadow(.6px .3px 0 #000)}
.ctl{display:flex;padding:8px 0 0 2px;height:58px}
.big{width:57px;height:41px;margin-right:3px}
.cc{display:grid;grid-auto-rows:24px;align-content:start}
.k1{width:95px;padding:2px 0 0 2px}.k1 label{display:flex;gap:6px;align-items:center;height:16px}
.k2{padding-top:2px;margin-left:3px;width:36px;line-height:17px}.tot{overflow:hidden;width:36px;height:17px}
.cc u{height:19px;color:#000}.k3{width:43px;margin-left:6px}.k3 u{background:#fff}
.rb{width:20px;height:23px;margin-left:2px}
.pb{width:57px;height:23px;margin:24px 0 0 1px}
.k4{grid-auto-rows:26px;width:75px;margin-left:3px}.cc.k4 u{box-shadow:none;border-color:#a0a0a0 #fff #fff #a0a0a0;padding-left:1px;line-height:19px}
.k5{margin-left:1px}
.right{width:173px;border-left:1px solid #a0a0a0;padding:2px 0 0 4px;display:flex;flex-direction:column;box-shadow:inset 1px 0 #fff}
.pens{margin:22px 0 0 3px;width:161px;height:142px;padding:1px;display:grid;grid-template-columns:142px 16px;grid-template-rows:122px 16px;flex:none}
.pview{overflow:hidden;background:#fff}.phs{grid-column:1/3}
.phead{height:18px;background:#f0f0f0;border-bottom:1px solid #696969;display:grid;grid-template-columns:77px 38px 27px;line-height:18px;white-space:nowrap;margin-bottom:1px}
.phead span{padding-left:6px;border-right:1px solid #808080}
.prow{display:grid;grid-template-columns:12px 65px 38px 27px;height:14px;align-items:center;letter-spacing:-.3px;border-bottom:1px solid #eee}
.prow svg{width:11px;height:11px}.prow span{padding-left:4px;line-height:13px}.prow i{height:12px;width:36px;border:1px solid #000;margin-left:1px}.prow em{padding-left:6px}
.sel0 span{background:#0078d7;color:#fff}
.k{background:#000}.b{background:#00f}.r{background:red}.g{background:#0f0}.m{background:#f0f}.y{background:#ff0}.p{background:#ff8080}.d{background:#800000}
.sw{display:flex;justify-content:space-between;margin:4px 0 0 6px;width:155px;height:20px;flex:none}.sw i{width:18px}
.params{margin:3px 0 0 3px;width:161px;height:310px;border:1px solid #a0a0a0;border-right-width:2px;border-bottom-width:2px;box-shadow:1px 1px #fff,inset 1px 1px #fff;flex:none;padding-left:2px}
.params label{display:flex;gap:7px;padding:3px 0 0 2px;height:24px;align-items:center}
.q{display:grid;grid-template-columns:91px 60px;column-gap:4px;height:20px;margin-bottom:3px}
.q.act{margin-bottom:2px}.params .q.act u{color:#000}.q.brk{margin-top:25px}
.q:nth-of-type(8){margin-bottom:2px}
.q>span{border:1px solid;border-color:#a0a0a0 #fff #fff #a0a0a0;height:19px;line-height:18px}
.params .q u{height:20px;position:relative;line-height:18px}
.q s{position:absolute;right:1px;top:1px;width:16px;height:17px;border:1px solid;border-color:#fff #808080 #808080 #fff;background:linear-gradient(#f0f0f0 7px,#808080 7px,#808080 8px,#f0f0f0 8px)}
.q s:before,.q s:after{content:"";position:absolute;left:5px;top:2px;border:2px solid transparent;border-top:0;border-bottom-color:#999}
.q s:after{top:11px;transform:scaleY(-1)}
.adv{display:flex;gap:5px;margin:31px 0 0 47px}
.adv .btn{width:32px;height:23px}.adv .btn+.btn{width:71px}
.pn{display:flex;margin:4px 0 0 3px;width:161px;gap:1px;flex:none}.pn .btn{width:62px;height:20px}
.pn u{width:98px;height:20px;color:#000;box-shadow:none;border-color:#a0a0a0 #fff #fff #a0a0a0;padding-left:1px;line-height:19px}
.wide{width:162px;height:26px;margin:2px 0 0 3px}.w2{margin-top:0}
.status{height:21px;border-top:1px solid #a0a0a0;box-shadow:inset 0 1px #fff;display:flex;padding-top:3px;font-size:11px;line-height:17px;gap:2px}
.st{padding-left:2px;width:1084px}
.pane{width:56px;height:17px;border:1px solid;border-color:#a0a0a0 #fff #fff #a0a0a0;padding-left:1px;line-height:16px;overflow:hidden}.pane.a{width:106px;padding-left:4px}
.task{height:40px;display:flex;font-family:"Open Sans",sans-serif;background:linear-gradient(90deg,#d3dec5,#d8e8bd 370px,#d5e7b8 500px,#d2e0d5 650px,#dadacd 800px,#dfd5d2 930px,#e2d7d9 1060px,#dfddd9 1140px,#d9e5ce 1200px,#dde4e4 1290px,#dce5ea)}
.start{width:48px;display:grid;place-items:center}
.search{width:288px;background:#fff;border:1px solid #c5c5cb;display:flex;align-items:center;padding-left:11px;font-size:14.500px;color:#222}
.search span{margin-left:10px}.ape{margin-left:8px}
.ti{width:49px;display:grid;place-items:center;position:relative;flex:none}
.ti svg{width:24px;height:24px}
.tv svg{width:22px;height:22px}
.tv+.ti{margin-left:1px}
.run:after{content:"";position:absolute;bottom:0;left:5px;width:40px;height:2px;background:#a4c61c}
.two:after{background:linear-gradient(90deg,#a4c61c 32px,#c9dd86 32px)}
.cur{background:#f1f2ec}.cur:after{left:0;width:49px}
.tray{margin:8px 0 0 151px}
.clock{margin-left:-8px;width:60px;font-size:11.500px;line-height:17px;display:grid;justify-items:center;padding-top:3px;align-content:start;flex:none}
.note{margin:11px 0 0 16px}.desk{width:1px;background:#b0babf;margin-left:19px}
ins{text-decoration:underline}
```
FILE: app.js
```js
const NS = 'http://www.w3.org/2000/svg';
function add(parent, name, attrs, text) {
  const el = document.createElementNS(NS, name);
  for (const k in attrs) el.setAttribute(k, attrs[k]);
  if (text !== undefined) el.textContent = text;
  parent.appendChild(el);
  return el;
}

// Rulers: one tick per millimetre, labels every ten.
const scale = 5.69, ox = 711.5, oy = 393;
const ruler = document.getElementById('ruler'), labels = document.getElementById('labels');
let d = 'M232 135.5H1172M232.5 135V629.5M213 629.5H233M1019.500 117V135M711.5 135v4';
for (let n = -84; n <= 80; n++) {
  const x = Math.floor(ox + n * scale) + 0.5;
  d += `M${x} 135V${n % 10 === 0 ? 125 : n % 5 === 0 ? 127 : 130}`;
  if (n % 10 === 0) add(labels, 'text', { x: n < 0 ? x - 2 : x, y: 124.5 }, n);
}
for (let n = -41; n <= 44; n++) {
  const y = Math.floor(oy - n * scale) + 0.5;
  d += `M232 ${y}H${n % 10 === 0 ? 222 : n % 5 === 0 ? 224 : 227}`;
  if (n % 10 === 0) add(labels, 'text', { transform: `translate(221 ${y - 1}) rotate(-90)` }, n);
}
add(ruler, 'path', { d, fill: 'none' });

// Serial number: digits separated by missing-glyph boxes.
const serial = document.getElementById('serial');
[...'000002'].forEach((c, i) => {
  const x = 471.5 + i * 32.4;
  add(serial, 'text', { x, y: 392.5, 'font-size': 41, textLength: 23, lengthAdjust: 'spacingAndGlyphs' }, c);
  if (i < 5) add(serial, 'rect', { x: x + 24.5, y: 365, width: 7, height: 27, style: 'fill:#fff' });
});

// QR code modules.
const rows = [
  '1111111001011011001111111', '1000001011110001101000001', '1011101011110011001011101',
  '1011101011110101101011101', '1011101011011011001011101', '1000001001111111001000001',
  '1111111011101011101111111', '0000000011101110100000000', '1011101111010111011011011',
  '0111011110111111010110110', '1110111011110110110100111', '0101111110110011111101011',
  '1011110101111011011110110', '1101001011110110111110111', '0011011111101101111011010',
  '1101110010111110001111101', '0110011101101111111111011', '0000000010111111000110110',
  '1111111011011111011011011', '1000001011111111000111110', '1011101001110011111111011',
  '1011101011101110111101111', '1011101001111111111111010', '1000001011110111110111110',
  '1111111010111111111011011'];
const m = 71 / 25;
const at = (o, i) => Math.round(o + i * m);
let q = '';
rows.forEach((r, j) => [...r].forEach((c, i) => {
  if (c === '1') q += `M${at(587, i)} ${at(492, j)}H${at(587, i + 1)}V${at(492, j + 1)}H${at(587, i)}z`;
}));
add(document.getElementById('qr'), 'path', { d: q });

// Track each label to its designed width.
document.querySelectorAll('[data-w]').forEach(el => {
  const range = document.createRange();
  range.selectNodeContents(el);
  const w = range.getBoundingClientRect().width;
  el.style.letterSpacing = ((el.dataset.w - w) / el.textContent.length).toFixed(3) + 'px';
});
```
